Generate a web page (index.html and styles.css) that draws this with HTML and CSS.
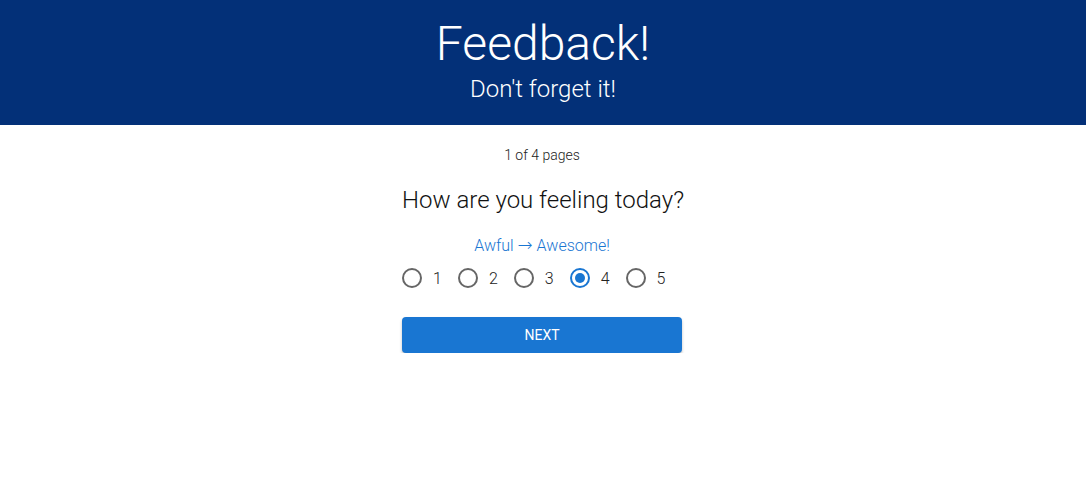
FILE: index.html
```html
<!DOCTYPE html>
<html>
<head>
<meta charset="utf-8">
<link rel="stylesheet" href="styles.css">
</head>
<body>
<header class="hero">
  <h1 class="hero-title">Feedback!</h1>
  <p class="hero-sub">Don't forget it!</p>
</header>
<main class="survey">
  <p class="progress">1 of 4 pages</p>
  <h2 class="question">How are you feeling today?</h2>
  <p class="scale">Awful <span class="arrow">→</span> Awesome!</p>
  <div class="radios">
    <label class="radio"><svg class="icon" viewBox="0 0 24 24"><circle cx="12" cy="12" r="9" fill="none" stroke="currentColor" stroke-width="2"/></svg><span>1</span></label>
    <label class="radio"><svg class="icon" viewBox="0 0 24 24"><circle cx="12" cy="12" r="9" fill="none" stroke="currentColor" stroke-width="2"/></svg><span>2</span></label>
    <label class="radio"><svg class="icon" viewBox="0 0 24 24"><circle cx="12" cy="12" r="9" fill="none" stroke="currentColor" stroke-width="2"/></svg><span>3</span></label>
    <label class="radio checked"><svg class="icon" viewBox="0 0 24 24"><circle cx="12" cy="12" r="9" fill="none" stroke="currentColor" stroke-width="2"/><circle cx="12" cy="12" r="5" fill="currentColor"/></svg><span>4</span></label>
    <label class="radio"><svg class="icon" viewBox="0 0 24 24"><circle cx="12" cy="12" r="9" fill="none" stroke="currentColor" stroke-width="2"/></svg><span>5</span></label>
  </div>
  <button class="next">NEXT</button>
</main>
</body>
</html>
```

FILE: styles.css
```css
* { box-sizing: border-box; }
body {
  margin: 0;
  font-family: Roboto, "Liberation Sans", sans-serif;
  background: #fff;
  color: #212121;
}
.hero {
  background: #033078;
  color: #fff;
  height: 125px;
  display: flex;
  flex-direction: column;
  align-items: center;
  padding-top: 16px;
}
.hero-title {
  margin: 0;
  font-size: 48px;
  font-weight: 300;
  line-height: 56px;
}
.hero-sub {
  margin: 2px 0 0;
  font-size: 24px;
  font-weight: 300;
  line-height: 30px;
}
.survey {
  width: 280px;
  margin: 0 0 0 calc(50% - 141px);
  padding-top: 20px;
  display: flex;
  flex-direction: column;
}
.progress {
  margin: 0;
  text-align: center;
  font-size: 14px;
  font-weight: 300;
  color: #222;
  line-height: 20px;
}
.question {
  margin: 20px 0 0;
  text-align: center;
  font-size: 24px;
  font-weight: 300;
  line-height: 30px;
  color: #111;
  white-space: nowrap;
}
.scale {
  margin: 21px 0 0;
  text-align: center;
  font-size: 16px;
  font-weight: 300;
  color: #1976d2;
  line-height: 20px;
}
.arrow {
  font-family: "DejaVu Sans", sans-serif;
  font-size: 18px;
  line-height: 1;
}
.radios {
  display: flex;
  margin: 10px 0 0 -2px;
}
.radio {
  display: flex;
  align-items: center;
  gap: 9px;
  margin-right: 14px;
  font-size: 16px;
  font-weight: 300;
  color: #222;
}
.icon {
  width: 24px;
  height: 24px;
  color: #666;
}
.checked .icon { color: #1976d2; }
.next {
  margin-top: 27px;
  width: 280px;
  height: 36px;
  border: none;
  border-radius: 4px;
  background: #1976d2;
  color: #fff;
  font-family: Roboto, "Liberation Sans", sans-serif;
  font-size: 14px;
  font-weight: 400;
  box-shadow: 0 2px 3px rgba(0,0,0,0.25);
}
```
